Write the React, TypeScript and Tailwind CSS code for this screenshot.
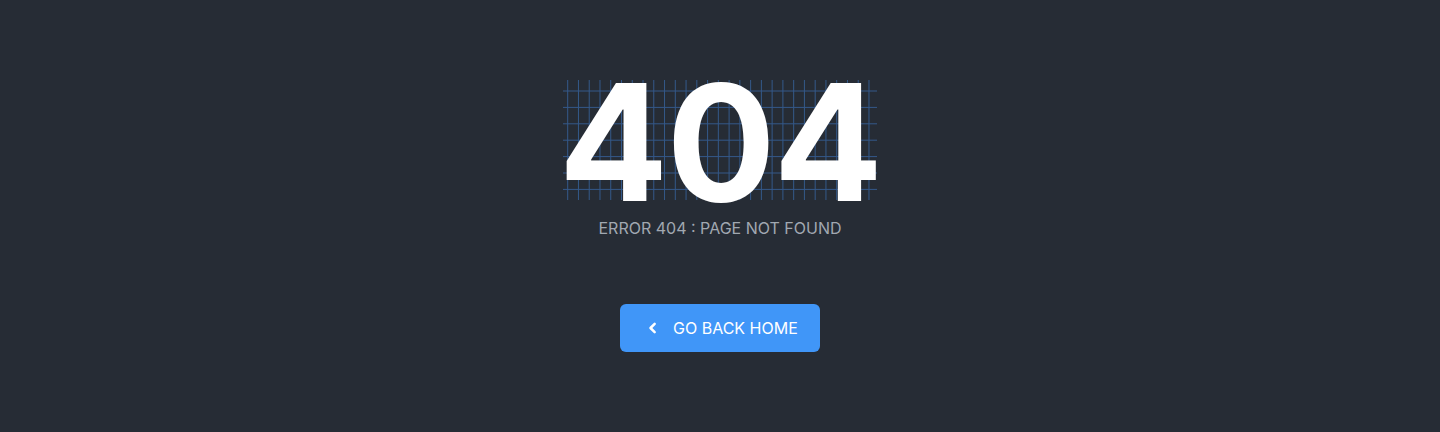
import React from 'react';

const GridLines: React.FC = () => {
  const cols = Array.from({ length: 29 }, (_, i) => 4.7 + i * 10.76);
  const rows = Array.from({ length: 7 }, (_, i) => 11 + i * 16.4);
  return (
    <svg className="absolute inset-0 h-full w-full" viewBox="0 0 314 120" preserveAspectRatio="none">
      {cols.map((x, i) => (
        <line key={`c${i}`} x1={x} y1={0} x2={x} y2={120} stroke="#34598a" strokeWidth={1} />
      ))}
      {rows.map((y, i) => (
        <line key={`r${i}`} x1={0} y1={y} x2={314} y2={y} stroke="#34598a" strokeWidth={1} />
      ))}
    </svg>
  );
};

export default function App() {
  return (
    <div className="flex h-[432px] w-full flex-col items-center justify-center bg-[#262c35] font-['Inter',sans-serif]">
      <div className="relative flex h-[120px] w-[314px] items-center justify-center">
        <GridLines />
        <h1 className="relative translate-y-[2px] text-[162px] font-bold leading-[120px] tracking-[-2px] text-white">404</h1>
      </div>
      <p className="mt-[16px] text-base text-[#a1a8b1]">ERROR 404 : PAGE NOT FOUND</p>
      <button className="mt-[64px] flex h-12 w-[200px] items-center gap-[10px] rounded-md bg-[#4096f8] pl-[23px] text-base text-white">
        <svg className="h-5 w-5" viewBox="0 0 24 24" fill="none" stroke="currentColor" strokeWidth={3} strokeLinecap="round" strokeLinejoin="round">
          <path d="M14 7l-5 5 5 5" />
        </svg>
        <span>GO BACK HOME</span>
      </button>
    </div>
  );
}
